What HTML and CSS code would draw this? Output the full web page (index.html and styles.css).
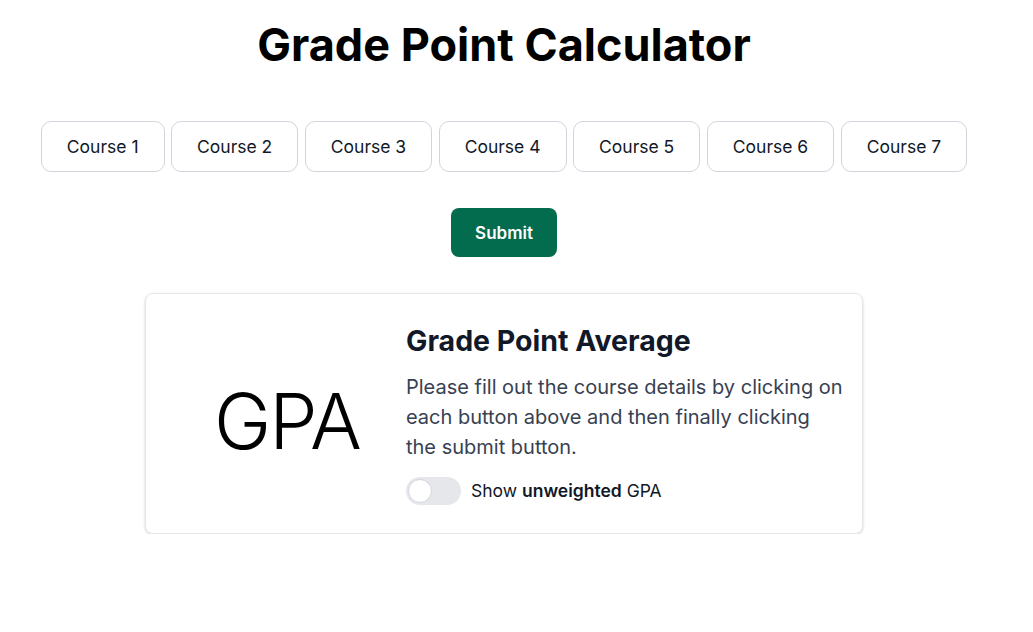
FILE: index.html
```html
<!DOCTYPE html>
<html lang="en">
<head>
<meta charset="utf-8">
<title>Grade Point Calculator</title>
<link rel="stylesheet" href="styles.css">
</head>
<body>
<main class="page">
  <h1 class="title">Grade Point Calculator</h1>
  <div class="courses">
    <button class="course">Course 1</button>
    <button class="course">Course 2</button>
    <button class="course">Course 3</button>
    <button class="course">Course 4</button>
    <button class="course">Course 5</button>
    <button class="course">Course 6</button>
    <button class="course">Course 7</button>
  </div>
  <button class="submit">Submit</button>
  <section class="card">
    <div class="logo"><span class="logo-text">GPA</span></div>
    <div class="info">
      <h2 class="info-title">Grade Point Average</h2>
      <p class="info-text">Please fill out the course details by clicking on each button above and then finally clicking the submit button.</p>
      <label class="toggle">
        <span class="switch"><span class="knob"></span></span>
        <span class="toggle-label">Show <b>unweighted</b> GPA</span>
      </label>
    </div>
  </section>
</main>
</body>
</html>
```
FILE: styles.css
```css
* { box-sizing: border-box; }
html, body { margin: 0; padding: 0; background: #fff; }
body { font-family: Inter, "Noto Sans", sans-serif; color: #111827; }
.page {
  width: 1008px;
  display: flex;
  flex-direction: column;
  align-items: center;
  padding-top: 19px;
}
.title {
  margin: 0;
  font-size: 45px;
  line-height: 52px;
  font-weight: 700;
  color: #000;
}
.courses {
  display: flex;
  gap: 6.5px;
  margin-top: 50px;
}
.course {
  font-family: inherit;
  font-size: 17.5px;
  line-height: 24px;
  color: #111827;
  background: #fff;
  border: 1px solid #d1d5db;
  border-radius: 10px;
  padding: 12px 25px;
  height: 51px;
}
.submit {
  margin-top: 36px;
  font-family: inherit;
  font-size: 17px;
  font-weight: 600;
  line-height: 24px;
  color: #fff;
  background: #046c4e;
  border: none;
  border-radius: 8px;
  height: 49px;
  padding: 0 24px;
}
.card {
  margin-top: 36px;
  width: 718px;
  height: 241px;
  display: flex;
  align-items: center;
  border: 1px solid #e5e7eb;
  border-radius: 8px;
  box-shadow: 0 1px 3px rgba(0,0,0,0.14), 0 1px 2px rgba(0,0,0,0.07);
}
.logo {
  width: 260px;
  display: flex;
  justify-content: center;
  padding-left: 22px;
  padding-top: 16px;
}
.logo-text {
  font-family: Inter, sans-serif;
  font-weight: 300;
  font-size: 77px;
  line-height: 1;
  color: #000;
  letter-spacing: -2px;
}
.info {
  flex: 1;
  padding: 16px 18px 16px 0;
}
.info-title {
  margin: 0 0 13px;
  font-size: 28.5px;
  line-height: 36px;
  font-weight: 700;
  color: #111827;
}
.info-text {
  margin: 0 0 15px;
  font-size: 20px;
  line-height: 30px;
  color: #374151;
}
.toggle {
  display: flex;
  align-items: center;
  gap: 10px;
}
.switch {
  width: 55px;
  height: 28px;
  border-radius: 14px;
  background: #e5e7eb;
  display: flex;
  align-items: center;
  padding-left: 2px;
}
.knob {
  width: 24px;
  height: 24px;
  border-radius: 50%;
  background: #fff;
  border: 1px solid #d1d5db;
}
.toggle-label {
  font-size: 17.5px;
  color: #111827;
}
.toggle-label b { font-weight: 600; }
```
